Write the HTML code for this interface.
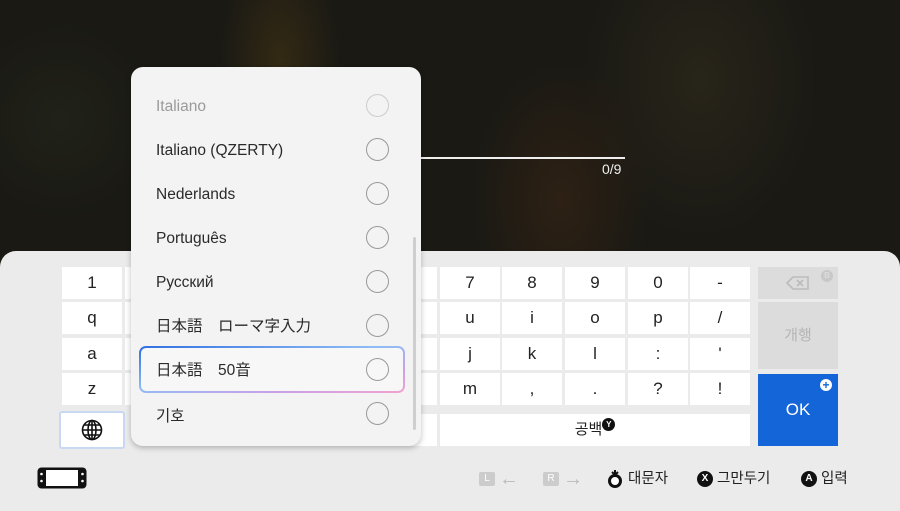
<!DOCTYPE html>
<html><head><meta charset="utf-8"><style>
*{margin:0;padding:0;box-sizing:border-box}
body{width:900px;height:506px;overflow:hidden;position:relative;font-family:"Liberation Sans","Noto Sans CJK KR",sans-serif;background:#1b1a15}
.bg{position:absolute;inset:0;background:
radial-gradient(ellipse 60px 120px at 280px 60px,rgba(110,80,20,.3),transparent),
radial-gradient(ellipse 90px 140px at 560px 200px,rgba(90,50,20,.3),transparent),
radial-gradient(ellipse 120px 160px at 700px 80px,rgba(80,70,40,.25),transparent),
radial-gradient(ellipse 100px 100px at 60px 120px,rgba(50,60,40,.25),transparent),
#1a1914}
.panel{position:absolute;left:0;top:251px;width:900px;height:260px;background:#ebebeb;border-radius:16px 16px 0 0}
.k{position:absolute;background:#fff;width:60px;height:32px;text-align:center;line-height:32px;font-size:17px;color:#222}
.dd{position:absolute;left:131px;top:67px;width:290px;height:379px;background:#f3f3f3;border-radius:12px;box-shadow:0 2px 6px rgba(0,0,0,.25)}
.it{position:absolute;left:25px;font-size:15.5px;color:#2a2a2a;font-family:"Liberation Sans","Noto Sans CJK JP",sans-serif;line-height:20px}
.rd{position:absolute;left:235px;width:23px;height:23px;border:1.3px solid #999;border-radius:50%}
.hint{position:absolute;top:469px;font-size:14.5px;color:#222;line-height:20px}
.btn{display:inline-block;width:16px;height:16px;border-radius:50%;background:#111;color:#fff;font-size:10px;font-weight:bold;text-align:center;line-height:16px;vertical-align:middle}
</style></head><body>
<div class="bg"></div>
<div style="position:absolute;left:421px;top:157px;width:204px;height:2px;background:#eee"></div>
<div style="position:absolute;left:602px;top:161px;color:#eee;font-size:14px">0/9</div>
<div class="panel"></div>
<div class="k" style="left:62px;top:267px">1</div>
<div class="k" style="left:62px;top:302px">q</div>
<div class="k" style="left:62px;top:338px">a</div>
<div class="k" style="left:62px;top:373px">z</div>
<div class="k" style="left:125px;top:267px"></div><div class="k" style="left:125px;top:302px"></div><div class="k" style="left:125px;top:338px"></div><div class="k" style="left:125px;top:373px"></div>
<div class="k" style="left:377px;top:267px"></div><div class="k" style="left:377px;top:302px"></div><div class="k" style="left:377px;top:338px"></div><div class="k" style="left:377px;top:373px"></div><div class="k" style="left:377px;top:414px;line-height:30px">|</div>
<div class="k" style="left:440px;top:267px">7</div><div class="k" style="left:502px;top:267px">8</div><div class="k" style="left:565px;top:267px">9</div><div class="k" style="left:628px;top:267px">0</div><div class="k" style="left:690px;top:267px">-</div>
<div class="k" style="left:440px;top:302px">u</div><div class="k" style="left:502px;top:302px">i</div><div class="k" style="left:565px;top:302px">o</div><div class="k" style="left:628px;top:302px">p</div><div class="k" style="left:690px;top:302px">/</div>
<div class="k" style="left:440px;top:338px">j</div><div class="k" style="left:502px;top:338px">k</div><div class="k" style="left:565px;top:338px">l</div><div class="k" style="left:628px;top:338px">:</div><div class="k" style="left:690px;top:338px">'</div>
<div class="k" style="left:440px;top:373px">m</div><div class="k" style="left:502px;top:373px">,</div><div class="k" style="left:565px;top:373px">.</div><div class="k" style="left:628px;top:373px">?</div><div class="k" style="left:690px;top:373px">!</div>
<div class="k" style="left:440px;top:414px;width:310px;font-size:15px">공백<span class="btn" style="width:13px;height:13px;line-height:13px;font-size:8px;vertical-align:top;margin-top:4px">Y</span></div>
<div class="k" style="left:758px;top:267px;width:80px;background:#dcdcdc"><svg width="26" height="16" viewBox="0 0 26 16" style="margin-top:8px"><path d="M8 2H23V14H8L2 8Z" fill="none" stroke="#bbb" stroke-width="1.6"/><path d="M12 5l6 6M18 5l-6 6" stroke="#bbb" stroke-width="1.6"/></svg><span style="position:absolute;right:5px;top:3px;width:12px;height:12px;border-radius:50%;background:#c8c8c8;color:#dcdcdc;font-size:8px;line-height:12px;font-weight:bold">B</span></div>
<div class="k" style="left:758px;top:302px;width:80px;height:67px;line-height:67px;background:#dcdcdc;color:#b5b5b5;font-size:15px">개행</div>
<div class="k" style="left:758px;top:374px;width:80px;height:72px;line-height:72px;background:#1466d8;color:#fff;font-size:17px">OK<span style="position:absolute;right:6px;top:5px;width:12px;height:12px;border-radius:50%;background:#fff;color:#1466d8;font-size:12px;line-height:12px;font-weight:bold">+</span></div>
<div class="k" style="left:59px;top:411px;width:66px;height:38px;border:2px solid #c8d8f3;border-radius:3px;line-height:34px"><svg width="22" height="22" viewBox="0 0 22 22" style="margin-top:6px"><g fill="none" stroke="#111" stroke-width="1.6"><circle cx="11" cy="11" r="9.5"/><ellipse cx="11" cy="11" rx="4" ry="9.5"/><path d="M11 1.5V20.5M1.5 11H20.5M3.5 6H18.5M3.5 16H18.5"/></g></svg></div>
<div class="dd">
<div class="it" style="top:30px;color:#9a9a9a">Italiano</div><div class="rd" style="top:27px;border-color:#ccc"></div>
<div class="it" style="top:74px">Italiano (QZERTY)</div><div class="rd" style="top:71px"></div>
<div class="it" style="top:118px">Nederlands</div><div class="rd" style="top:115px"></div>
<div class="it" style="top:162px">Português</div><div class="rd" style="top:159px"></div>
<div class="it" style="top:206px">Русский</div><div class="rd" style="top:203px"></div>
<div class="it" style="top:250px">日本語　ローマ字入力</div><div class="rd" style="top:247px"></div>
<div style="position:absolute;left:8px;top:279px;width:266px;height:47px;border-radius:7px;padding:2px;background:linear-gradient(170deg,#2f6ee0,#8fbcf5 45%,#c9a0e8 75%,#f2a3cf)"><div style="width:100%;height:100%;background:#f7f7f7;border-radius:5px"></div></div>
<div class="it" style="top:294px">日本語　50音</div><div class="rd" style="top:291px"></div>
<div class="it" style="top:338px;font-family:'Noto Sans CJK KR',sans-serif">기호</div><div class="rd" style="top:335px"></div>
<div style="position:absolute;left:282px;top:170px;width:3px;height:193px;background:#cfcfcf;border-radius:2px"></div>
</div>
<svg style="position:absolute;left:37px;top:467px" width="50" height="22" viewBox="0 0 50 22"><rect x="0.5" y="0.5" width="49" height="21" rx="4" fill="#111"/><rect x="9" y="3" width="32" height="16" fill="#fff"/><circle cx="4.5" cy="7" r="1.3" fill="#fff"/><circle cx="4.5" cy="14" r="1.3" fill="#fff"/><circle cx="45.5" cy="7" r="1.3" fill="#fff"/><circle cx="45.5" cy="14" r="1.3" fill="#fff"/></svg>
<div class="hint" style="left:479px;color:#bbb"><span style="display:inline-block;width:16px;height:14px;background:#ccc;color:#fff;font-size:10px;text-align:center;line-height:14px;border-radius:2px;vertical-align:middle">L</span> <span style="font-size:20px;vertical-align:middle">←</span></div>
<div class="hint" style="left:543px;color:#bbb"><span style="display:inline-block;width:16px;height:14px;background:#ccc;color:#fff;font-size:10px;text-align:center;line-height:14px;border-radius:2px;vertical-align:middle">R</span> <span style="font-size:20px;vertical-align:middle">→</span></div>
<div class="hint" style="left:606px"><svg width="18" height="20" viewBox="0 0 18 20" style="vertical-align:middle"><circle cx="9" cy="12" r="7" fill="#111"/><circle cx="9" cy="12" r="4" fill="#fff"/><path d="M9 1v4M6 3l3 3 3-3" stroke="#111" stroke-width="2" fill="none"/></svg> 대문자</div>
<div class="hint" style="left:697px"><span class="btn">X</span> 그만두기</div>
<div class="hint" style="left:801px"><span class="btn">A</span> 입력</div>
</body></html>
